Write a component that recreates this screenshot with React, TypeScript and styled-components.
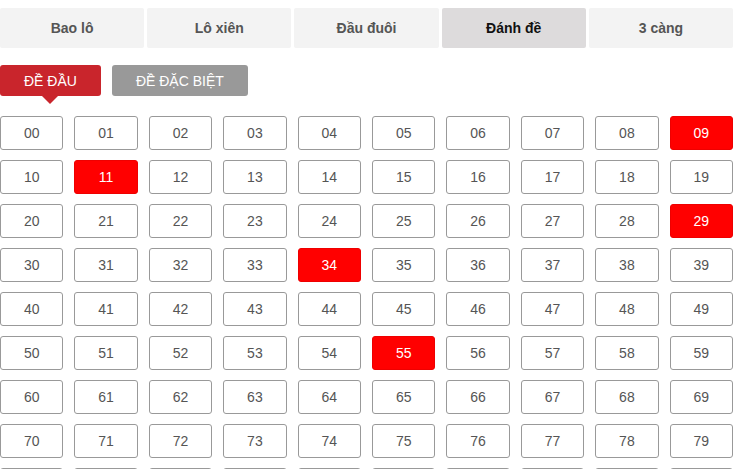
import React from 'react';
import styled, { createGlobalStyle } from 'styled-components';

const tabs = ['Bao lô', 'Lô xiên', 'Đầu đuôi', 'Đánh đề', '3 càng'];
const picked = ['09', '11', '29', '34', '55'];
const numbers = Array.from({ length: 100 }, (_, i) => String(i).padStart(2, '0'));

const App = () => {
  return (
    <Page>
      <GlobalStyle />
      <TabBar>
        {tabs.map((t) => (
          <Tab key={t} $active={t === 'Đánh đề'}>
            {t}
          </Tab>
        ))}
      </TabBar>
      <Modes>
        <ModeButton $active>ĐỀ ĐẦU</ModeButton>
        <ModeButton>ĐỀ ĐẶC BIỆT</ModeButton>
      </Modes>
      <NumberGrid>
        {numbers.map((n) => (
          <Cell key={n} $selected={picked.includes(n)}>
            {n}
          </Cell>
        ))}
      </NumberGrid>
    </Page>
  );
};

export default App;

const GlobalStyle = createGlobalStyle`
  html, body {
    margin: 0;
    background: #fff;
    font-family: 'Liberation Sans', Arial, sans-serif;
  }
`;

const Page = styled.div`
  width: 733px;
  height: 469px;
  overflow: hidden;
  padding-top: 8px;
  box-sizing: border-box;
`;

const TabBar = styled.div`
  display: grid;
  grid-template-columns: repeat(5, 1fr);
  column-gap: 3px;
`;

const Tab = styled.div<{ $active?: boolean }>`
  height: 40px;
  display: flex;
  align-items: center;
  justify-content: center;
  border-radius: 2px;
  background: ${(p) => (p.$active ? '#dddbdc' : '#f3f3f3')};
  color: ${(p) => (p.$active ? '#111' : '#555')};
  font-size: 14px;
  font-weight: bold;
`;

const Modes = styled.div`
  display: flex;
  gap: 11px;
  margin-top: 17px;
`;

const ModeButton = styled.div<{ $active?: boolean }>`
  position: relative;
  height: 31px;
  padding: 0 24px;
  display: flex;
  align-items: center;
  border-radius: 3px;
  background: ${(p) => (p.$active ? '#c9252c' : '#999')};
  color: #fff;
  font-size: 14px;

  &:after {
    content: '';
    display: ${(p) => (p.$active ? 'block' : 'none')};
    position: absolute;
    left: 50%;
    top: 100%;
    margin-left: -8px;
    border-left: 8px solid transparent;
    border-right: 8px solid transparent;
    border-top: 8px solid #c9252c;
  }
`;

const NumberGrid = styled.div`
  display: grid;
  grid-template-columns: repeat(10, 1fr);
  gap: 10px 11px;
  margin-top: 20px;
`;

const Cell = styled.div<{ $selected?: boolean }>`
  height: 34px;
  box-sizing: border-box;
  display: flex;
  align-items: center;
  justify-content: center;
  border: 1px solid ${(p) => (p.$selected ? '#e00' : '#999')};
  border-radius: 3px;
  background: ${(p) => (p.$selected ? '#ff0000' : '#fff')};
  color: ${(p) => (p.$selected ? '#fff' : '#555')};
  font-size: 14px;
`;
